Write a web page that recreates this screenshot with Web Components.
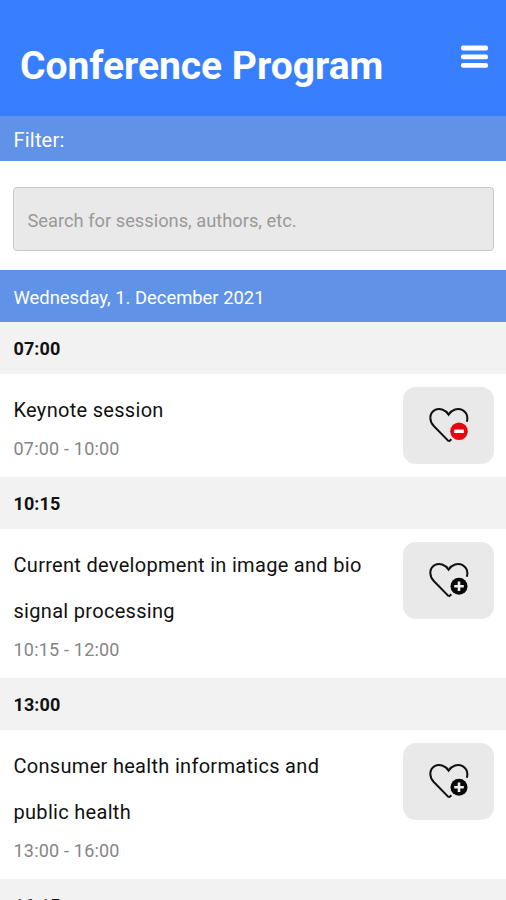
<!DOCTYPE html>
<html lang="en">
<head>
<meta charset="utf-8">
<title>Conference Program</title>
<style>
  body {
    margin: 0;
    height: 900px;
    overflow: hidden;
    background: #fff;
    font-family: Roboto, "Liberation Sans", sans-serif;
    color: #111;
  }
</style>
</head>
<body>
<conference-app></conference-app>

<script>
/* Top bar with the page title and the menu button */
class AppHeader extends HTMLElement {
  constructor() {
    super();
    this.attachShadow({ mode: 'open' });
    this.shadowRoot.innerHTML = `
      <style>
        :host {
          display: flex;
          justify-content: space-between;
          align-items: flex-start;
          box-sizing: border-box;
          height: 116px;
          padding: 42px 18px 0 20px;
          background: #387fff;
          color: #fff;
        }
        h1 {
          margin: 0;
          font-size: 39px;
          line-height: 48px;
          font-weight: 700;
          white-space: nowrap;
        }
        button {
          display: block;
          margin: 3px 0 0;
          padding: 0;
          border: 0;
          background: none;
        }
        svg { display: block; }
      </style>
      <h1><slot></slot></h1>
      <button aria-label="Menu">
        <svg width="27" height="24" viewBox="0 0 27 24" fill="#fff">
          <rect x="0" y="0.6" width="27" height="4.8" rx="2"/>
          <rect x="0" y="9.4" width="27" height="4.8" rx="2"/>
          <rect x="0" y="18" width="27" height="4.8" rx="2"/>
        </svg>
      </button>
    `;
  }
}

/* Coloured or grey strip used for the filter, the day and the time slots */
class SectionBar extends HTMLElement {
  constructor() {
    super();
    this.attachShadow({ mode: 'open' });
    this.shadowRoot.innerHTML = `
      <style>
        :host {
          display: flex;
          align-items: center;
          box-sizing: border-box;
          height: 52px;
          padding: 2px 13px 0 13.5px;
          background: #6092e7;
          color: #fff;
          font-size: 18.4px;
        }
        :host([kind="filter"]) {
          height: 45px;
          font-size: 20px;
          letter-spacing: 0.2px;
        }
        :host([kind="slot"]) {
          padding-top: 1px;
          background: #f2f2f2;
          color: #111;
          font-weight: 700;
          font-size: 18px;
          letter-spacing: 0.1px;
        }
      </style>
      <slot></slot>
    `;
  }
}

class SearchField extends HTMLElement {
  constructor() {
    super();
    this.attachShadow({ mode: 'open' });
    this.shadowRoot.innerHTML = `
      <style>
        :host {
          display: block;
          padding: 26px 12px 19px 13px;
        }
        .field {
          display: flex;
          align-items: center;
          box-sizing: border-box;
          height: 64px;
          padding: 3px 14px 0 13.5px;
          border: 1px solid #c8c8c8;
          border-radius: 4px;
          background: #e9e9e9;
          color: #999;
          font-size: 18.3px;
        }
      </style>
      <div class="field" role="searchbox"><slot></slot></div>
    `;
  }
}

/* Heart button, with a minus badge when the session is already saved */
class FavoriteButton extends HTMLElement {
  constructor() {
    super();
    this.attachShadow({ mode: 'open' });
  }

  connectedCallback() {
    const saved = this.hasAttribute('saved');
    const badge = saved
      ? `<circle cx="31" cy="24.2" r="8.8" fill="#e9070f"/>
         <rect x="26.2" y="22.6" width="9.6" height="3.4" fill="#fff"/>`
      : `<circle cx="31" cy="24.2" r="8.5" fill="#080808"/>
         <path d="M31 19.4v9.6M26.2 24.2h9.6" stroke="#eee" stroke-width="2.6"/>`;

    this.shadowRoot.innerHTML = `
      <style>
        :host {
          display: block;
          flex: none;
        }
        button {
          display: flex;
          align-items: center;
          justify-content: center;
          width: 91px;
          height: 77px;
          margin: 0;
          padding: 0;
          border: 0;
          border-radius: 13px;
          background: #e9e9e9;
        }
        svg { display: block; }
      </style>
      <button aria-label="${saved ? 'Remove from favorites' : 'Add to favorites'}">
        <svg width="42" height="38" viewBox="0 0 42 38" fill="none">
          <path d="M20.8 34.4L5.8 19C0.6 13.2 1.6 6.2 6.6 3.2C11.4 0.7 17.2 2.4 20.6 7.6C24 2.4 29.8 0.7 34.6 3.2C38.8 5.8 40.2 10 38.8 14.8M20.8 34.4L23.4 32.2" stroke="#111" stroke-width="2"/>
          ${badge}
        </svg>
      </button>
    `;
  }
}

class SessionItem extends HTMLElement {
  constructor() {
    super();
    this.attachShadow({ mode: 'open' });
    this.shadowRoot.innerHTML = `
      <style>
        :host {
          display: flex;
          justify-content: space-between;
          align-items: flex-start;
          box-sizing: border-box;
          padding: 13px 12px 12px 13.5px;
          background: #fff;
        }
        .text { width: 365px; }
        .title {
          font-size: 20px;
          line-height: 46px;
          letter-spacing: 0.3px;
        }
        .time {
          color: #858585;
          font-size: 18px;
          line-height: 32px;
          letter-spacing: 0.2px;
        }
      </style>
      <div class="text">
        <div class="title"><slot></slot></div>
        <div class="time"><slot name="time"></slot></div>
      </div>
      <slot name="action"></slot>
    `;
  }
}

class ConferenceApp extends HTMLElement {
  constructor() {
    super();
    this.attachShadow({ mode: 'open' });
    this.shadowRoot.innerHTML = `
      <style>
        :host {
          display: block;
          width: 506px;
          height: 900px;
          overflow: hidden;
        }
      </style>
      <app-header>Conference Program</app-header>
      <section-bar kind="filter">Filter:</section-bar>
      <search-field>Search for sessions, authors, etc.</search-field>
      <section-bar>Wednesday, 1. December 2021</section-bar>

      <section-bar kind="slot">07:00</section-bar>
      <session-item>
        Keynote session
        <span slot="time">07:00 - 10:00</span>
        <favorite-button slot="action" saved></favorite-button>
      </session-item>

      <section-bar kind="slot">10:15</section-bar>
      <session-item>
        Current development in image and bio signal processing
        <span slot="time">10:15 - 12:00</span>
        <favorite-button slot="action"></favorite-button>
      </session-item>

      <section-bar kind="slot">13:00</section-bar>
      <session-item>
        Consumer health informatics and public health
        <span slot="time">13:00 - 16:00</span>
        <favorite-button slot="action"></favorite-button>
      </session-item>

      <section-bar kind="slot">16:15</section-bar>
    `;
  }
}

customElements.define('app-header', AppHeader);
customElements.define('section-bar', SectionBar);
customElements.define('search-field', SearchField);
customElements.define('favorite-button', FavoriteButton);
customElements.define('session-item', SessionItem);
customElements.define('conference-app', ConferenceApp);
</script>
</body>
</html>
